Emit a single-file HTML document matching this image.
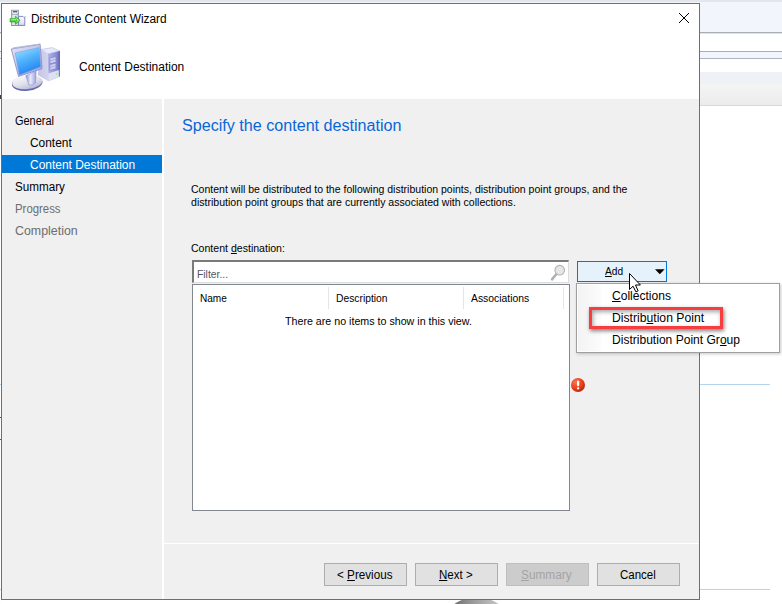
<!DOCTYPE html>
<html>
<head>
<meta charset="utf-8">
<title>Distribute Content Wizard</title>
<style>
html,body{margin:0;padding:0;}
body{width:782px;height:604px;overflow:hidden;background:#fff;position:relative;font-family:"Liberation Sans",sans-serif;font-size:12px;color:#000;}
.a{position:absolute;}
.t{position:absolute;white-space:nowrap;transform-origin:0 0;}
u{text-decoration:underline;text-decoration-thickness:1px;text-underline-offset:1px;}
#bg div{position:absolute;left:0;width:782px;}
.btn{position:absolute;box-sizing:border-box;width:83px;height:23px;top:563px;border:1px solid #adadad;background:#e1e1e1;}
</style>
</head>
<body>
<!-- application window behind the wizard -->
<div id="bg">
  <div style="top:0;height:2px;background:#e3e6eb;"></div>
  <div style="top:2px;height:30px;background:#f2f5fb;"></div>
  <div style="top:32px;height:1px;background:#a9adb8;"></div>
  <div style="top:33px;height:1px;background:#dfe3ea;"></div>
  <div style="top:51px;height:1px;background:#a9adb8;"></div>
  <div style="top:52px;height:6px;background:#f2f5fb;"></div>
  <div style="top:58px;height:1px;background:#b0b4be;"></div>
  <div style="top:72px;height:12px;background:#eef1f6;"></div>
  <div style="top:84px;height:21px;background:linear-gradient(#f5f5f5,#ebebeb);"></div>
  <div style="top:105px;height:1px;background:#d8d8d8;"></div>
  <div style="top:59px;width:1px;height:545px;background:#fdfdfd;"></div>
  <div style="top:95px;width:1px;height:4px;background:#3c3c3c;"></div>
  <div style="top:417px;width:1px;height:1px;background:#555;"></div>
  <div style="top:439px;width:1px;height:1px;background:#555;"></div>
  <div style="top:384px;width:770px;height:1px;background:#b5d5ee;"></div>
  <div style="top:589px;width:770px;height:1px;background:#b5d5ee;"></div>
</div>
<!-- grey disc peeking out under the window -->
<div class="a" style="left:437.6px;top:596.8px;width:77.8px;height:77.8px;border-radius:50%;background:linear-gradient(90deg,#6e6e6e 20%,#9a9a9a 45%,#c6c6c6 80%);"></div>

<!-- wizard window -->
<div class="a" style="left:1px;top:3px;width:697px;height:595px;border:1px solid #6f6f6f;background:#f0f0f0;"></div>
<div class="a" style="left:2px;top:4px;width:697px;height:95px;background:#fff;"></div>
<div class="a" style="left:162px;top:99px;width:2px;height:500px;background:#fff;"></div>
<div class="a" style="left:164px;top:543px;width:535px;height:1px;background:#fff;"></div>
<div class="a" style="left:2px;top:155px;width:160px;height:18px;background:#0078d7;"></div>

<!-- close -->
<svg class="a" style="left:678px;top:12px;" width="12" height="12" viewBox="0 0 12 12"><path d="M1 1 L11 11 M11 1 L1 11" stroke="#000" stroke-width="1" fill="none"/></svg>

<!-- filter box -->
<div class="a" style="left:192px;top:260px;width:374px;height:20px;background:#fff;border-top:2px solid #7a7a7a;border-left:2px solid #7a7a7a;border-right:1px solid #dcdcdc;border-bottom:1px solid #dcdcdc;"></div>
<!-- list -->
<div class="a" style="left:192px;top:284px;width:376px;height:225px;background:#fff;border:1px solid #828790;"></div>
<div class="a" style="left:328px;top:287px;width:1px;height:22px;background:#e5e5e5;"></div>
<div class="a" style="left:463px;top:287px;width:1px;height:22px;background:#e5e5e5;"></div>
<div class="a" style="left:563px;top:287px;width:1px;height:22px;background:#e5e5e5;"></div>


<!-- title bar icon -->
<svg class="a" style="left:9px;top:9px;" width="18" height="18" viewBox="9 9 18 18">
  <defs>
    <linearGradient id="tw" x1="0" y1="0" x2="1" y2="0"><stop offset="0" stop-color="#c9cfd4"/><stop offset="0.5" stop-color="#f4f6f7"/><stop offset="1" stop-color="#c3c9d0"/></linearGradient>
    <linearGradient id="fo" x1="0" y1="0" x2="0" y2="1"><stop offset="0" stop-color="#ffffff"/><stop offset="1" stop-color="#d9d6f3"/></linearGradient>
    <linearGradient id="ga" x1="0" y1="0" x2="0" y2="1"><stop offset="0" stop-color="#5fdc4c"/><stop offset="1" stop-color="#24b51c"/></linearGradient>
  </defs>
  <rect x="11.4" y="10.2" width="7" height="15.3" fill="url(#tw)" stroke="#8a90a6" stroke-width="0.8"/>
  <rect x="11.8" y="14" width="6.2" height="0.8" fill="#9aa0b0"/>
  <rect x="13" y="11.2" width="4" height="1.1" fill="#37444a"/>
  <path d="M18.6 25.4 V16.4 H23 L24 17.6 H24.8 V25.4 Z" fill="url(#fo)" stroke="#7e7bc2" stroke-width="0.9"/>
  <path d="M24.6 17.4 L25.4 16.2" stroke="#7e7bc2" stroke-width="0.8"/>
  <path d="M11 25.5 H25" stroke="#8a88c0" stroke-width="0.8"/>
  <path d="M10 18.6 H15.2 V16 L20.2 20.3 L15.2 24.6 V22 H10 Z" fill="url(#ga)" stroke="#27ad27" stroke-width="0.6" stroke-linejoin="round"/>
  <path d="M11.2 19.8 H16 M16.4 18.6 L18.4 20.3 L16.4 22" stroke="#d4f8cc" stroke-width="0.9" fill="none"/>
</svg>

<!-- computer icon -->
<svg class="a" style="left:6px;top:38px;" width="64" height="58" viewBox="6 38 64 58">
  <defs>
    <linearGradient id="scr" x1="0.2" y1="0" x2="0.6" y2="1"><stop offset="0" stop-color="#9bdcff"/><stop offset="0.45" stop-color="#4fb2fc"/><stop offset="1" stop-color="#1f7fee"/></linearGradient>
    <linearGradient id="frm" x1="0" y1="0" x2="1" y2="1"><stop offset="0" stop-color="#e4e6f6"/><stop offset="1" stop-color="#9ea2da"/></linearGradient>
    <linearGradient id="bas" x1="0.2" y1="0" x2="0.7" y2="1"><stop offset="0" stop-color="#fbfbfd"/><stop offset="0.6" stop-color="#dcdde8"/><stop offset="1" stop-color="#b4b6d4"/></linearGradient>
    <linearGradient id="fr" x1="0" y1="0" x2="1" y2="0"><stop offset="0" stop-color="#b3b6ea"/><stop offset="0.75" stop-color="#8589d2"/><stop offset="1" stop-color="#6367b6"/></linearGradient>
    <linearGradient id="sd" x1="0" y1="0" x2="1" y2="0"><stop offset="0" stop-color="#c2c4e4"/><stop offset="1" stop-color="#d3d5ee"/></linearGradient>
    <linearGradient id="nk" x1="0" y1="0" x2="1" y2="0"><stop offset="0" stop-color="#8e92d6"/><stop offset="0.45" stop-color="#e8eafa"/><stop offset="1" stop-color="#9a9edb"/></linearGradient>
  </defs>
  <!-- tower -->
  <path d="M41 49.5 L52.1 47.6 L59.8 51 L47.8 53.9 Z" fill="#e9eaf9" stroke="#a9acdc" stroke-width="0.5"/>
  <path d="M41 49.5 L47.8 53.9 L48.3 81.2 L37.7 75 Z" fill="url(#sd)"/>
  <path d="M47.8 53.9 L59.8 51 L59.8 76.4 L48.3 81.2 Z" fill="url(#fr)"/>
  <path d="M48.2 73.4 L59.8 69.8 L59.8 76.4 L48.3 81.2 Z" fill="#dfe0f4"/>
  <path d="M59.3 51.2 L59.3 76.5" stroke="#6266b4" stroke-width="1"/>
  <path d="M49.8 58 L56 56.6 L56 62.2 L49.8 63.8 Z" fill="#cfd1f2" stroke="#7d81c8" stroke-width="0.7"/>
  <path d="M49.8 64.6 L56 63 L56 68.6 L49.8 70.4 Z" fill="#cfd1f2" stroke="#7d81c8" stroke-width="0.7"/>
  <path d="M49.9 60.8 L56 59.3 M49.9 67.4 L56 65.8" stroke="#8f93d2" stroke-width="0.6"/>
  <circle cx="56.5" cy="74" r="0.7" fill="#7aea55"/>
  <!-- base -->
  <ellipse cx="27.2" cy="83.2" rx="15.4" ry="7.6" fill="#676ab0" transform="rotate(-6 27.2 83.2)"/>
  <ellipse cx="27.2" cy="82.2" rx="15" ry="6.9" fill="url(#bas)" transform="rotate(-6 27.2 82.2)"/>
  <!-- neck -->
  <path d="M25.8 75.8 L36.2 71 L35.4 83 Q32.4 86 29 85 Z" fill="url(#nk)" stroke="#8b8fd0" stroke-width="0.6"/>
  <!-- monitor -->
  <path d="M11.3 49 L40.1 44.2 L42 68.7 L18.5 76.4 Z" fill="url(#frm)" stroke="#8487c8" stroke-width="0.8" stroke-linejoin="round"/>
  <path d="M11.3 49 L13.6 47.2 L40.6 43.6 L40.1 44.2 Z" fill="#b8bbd8"/>
  <path d="M15.1 52.9 L39.1 47.6 L40.6 66.8 L19.4 75 Z" fill="url(#scr)" stroke="#6f9fe0" stroke-width="0.5"/>
</svg>

<!-- search glass -->
<svg class="a" style="left:548px;top:262px;" width="20" height="20" viewBox="548 262 20 20">
  <path d="M556.4 274 L552 279.4" stroke="#b0b0b0" stroke-width="2.5" stroke-linecap="round"/>
  <circle cx="559.7" cy="270.2" r="4.8" fill="#e6e6e6" stroke="#b2b2b2" stroke-width="1.1"/>
</svg>

<!-- Add split button -->
<div class="a" style="left:577px;top:261px;width:88px;height:19px;border:1px solid #0078d7;background:#e5f1fb;"></div>
<svg class="a" style="left:654.5px;top:269px;" width="10" height="6" viewBox="0 0 10 6"><path d="M0 0.3 H9.6 L4.8 5.3 Z" fill="#000"/></svg>

<!-- error icon -->
<svg class="a" style="left:570px;top:377px;" width="16" height="16" viewBox="0 0 16 16">
  <defs><radialGradient id="rg" cx="35%" cy="30%" r="75%"><stop offset="0" stop-color="#f7774f"/><stop offset="0.6" stop-color="#e8401c"/><stop offset="1" stop-color="#b3260c"/></radialGradient></defs>
  <circle cx="8" cy="8" r="7" fill="url(#rg)"/>
  <rect x="7" y="3.6" width="2.2" height="5.6" rx="1" fill="#fff"/>
  <rect x="7" y="10.2" width="2.2" height="2.2" rx="0.8" fill="#fff"/>
</svg>

<!-- wizard buttons -->
<div class="btn" style="left:324px;"></div>
<div class="btn" style="left:415px;"></div>
<div class="btn" style="left:506px;background:#cccccc;border-color:#bfbfbf;"></div>
<div class="btn" style="left:597px;"></div>

<!-- drop-down menu -->
<div class="a" style="left:576px;top:283px;width:202px;height:68px;border:1px solid #a0a0a0;background:#fff;box-shadow:1px 1px 3px rgba(0,0,0,0.22);"></div>
<div class="a" style="left:578px;top:285px;width:23px;height:66px;background:linear-gradient(90deg,#f3f3f3,#fcfcfc);"></div>

<div class="t" id="ttl" style="left:31.00px;top:11.7px;font-size:12px;line-height:15px;color:#000;transform:scaleX(0.9926);">Distribute Content Wizard</div>
<div class="t" id="hd" style="left:79.20px;top:60.3px;font-size:12px;line-height:15px;color:#000;transform:scaleX(0.9981);">Content Destination</div>
<div class="t" id="n1" style="left:15.42px;top:114.2px;font-size:12px;line-height:15px;color:#000;transform:scaleX(0.9123);">General</div>
<div class="t" id="n2" style="left:30.40px;top:136.2px;font-size:12px;line-height:15px;color:#000;transform:scaleX(0.9929);">Content</div>
<div class="t" id="n3" style="left:30.40px;top:158.2px;font-size:12px;line-height:15px;color:#fff;transform:scaleX(0.9971);">Content Destination</div>
<div class="t" id="n4" style="left:15.40px;top:180.2px;font-size:12px;line-height:15px;color:#000;transform:scaleX(0.9727);">Summary</div>
<div class="t" id="n5" style="left:15.10px;top:202.2px;font-size:12px;line-height:15px;color:#6d6d6d;transform:scaleX(0.9490);">Progress</div>
<div class="t" id="n6" style="left:15.39px;top:224.2px;font-size:12px;line-height:15px;color:#6d6d6d;transform:scaleX(1.0333);">Completion</div>
<div class="t" id="h1" style="left:181.59px;top:116.3px;font-size:16px;line-height:20px;color:#0a66d8;transform:scaleX(1.0074);">Specify the content destination</div>
<div class="t" id="b1" style="left:191.02px;top:182.2px;font-size:11px;line-height:14px;color:#000;transform:scaleX(0.9553);">Content will be distributed to the following distribution points, distribution point groups, and the</div>
<div class="t" id="b2" style="left:191.02px;top:195.2px;font-size:11px;line-height:14px;color:#000;transform:scaleX(0.9607);">distribution point groups that are currently associated with collections.</div>
<div class="t" id="b3" style="left:191.02px;top:241.2px;font-size:11px;line-height:14px;color:#000;transform:scaleX(0.9598);">Content <u>d</u>estination:</div>
<div class="t" id="fl" style="left:197.00px;top:266.9px;font-size:11px;line-height:14px;color:#55555f;transform:scaleX(0.9394);">Filter...</div>
<div class="t" id="c1" style="left:200.00px;top:291.2px;font-size:11px;line-height:14px;color:#000;transform:scaleX(0.9147);">Name</div>
<div class="t" id="c2" style="left:336.20px;top:291.2px;font-size:11px;line-height:14px;color:#000;transform:scaleX(0.9365);">Description</div>
<div class="t" id="c3" style="left:470.97px;top:291.2px;font-size:11px;line-height:14px;color:#000;transform:scaleX(0.9436);">Associations</div>
<div class="t" id="em" style="left:285.21px;top:313.7px;font-size:11px;line-height:14px;color:#000;transform:scaleX(0.9703);">There are no items to show in this view.</div>
<div class="t" id="ad" style="left:604.62px;top:264.2px;font-size:11.5px;line-height:14px;color:#000;transform:scaleX(0.8814);"><u>A</u>dd</div>
<div class="t" id="m1" style="left:612.00px;top:288.9px;font-size:12px;line-height:15px;color:#000;transform:scaleX(1.0051);"><u>C</u>ollections</div>
<div class="t" id="m2" style="left:612.40px;top:311.2px;font-size:12px;line-height:15px;color:#000;transform:scaleX(1.0143);">Distrib<u>u</u>tion Point</div>
<div class="t" id="m3" style="left:612.39px;top:333.2px;font-size:12px;line-height:15px;color:#000;transform:scaleX(1.0048);">Distribution Point Gr<u>o</u>up</div>
<div class="t" id="p1" style="left:337.41px;top:567.8px;font-size:12px;line-height:15px;color:#000;transform:scaleX(0.9738);">&lt; <u>P</u>revious</div>
<div class="t" id="p2" style="left:438.58px;top:567.8px;font-size:12px;line-height:15px;color:#000;transform:scaleX(0.9601);"><u>N</u>ext &gt;</div>
<div class="t" id="p3" style="left:520.81px;top:567.8px;font-size:12px;line-height:15px;color:#a4a4a4;transform:scaleX(0.9844);"><u>S</u>ummary</div>
<div class="t" id="p4" style="left:619.79px;top:567.8px;font-size:12px;line-height:15px;color:#000;transform:scaleX(0.9568);">Cancel</div>

<!-- red highlight -->
<div class="a" style="left:589px;top:307px;width:128px;height:16px;border:3px solid #f83d41;box-shadow:1px 2px 4px rgba(0,0,0,0.5), inset 1px 2px 4px rgba(0,0,0,0.35);"></div>

<!-- mouse pointer -->
<svg class="a" style="left:629px;top:273px;" width="13" height="21" viewBox="0 0 13 21"><path d="M0.5 0.5 L0.5 16.5 L4.1 13.2 L6.9 18.9 L9.1 17.9 L6.5 12 L11.4 12 Z" fill="#fff" stroke="#000" stroke-width="1"/></svg>
</body>
</html>
